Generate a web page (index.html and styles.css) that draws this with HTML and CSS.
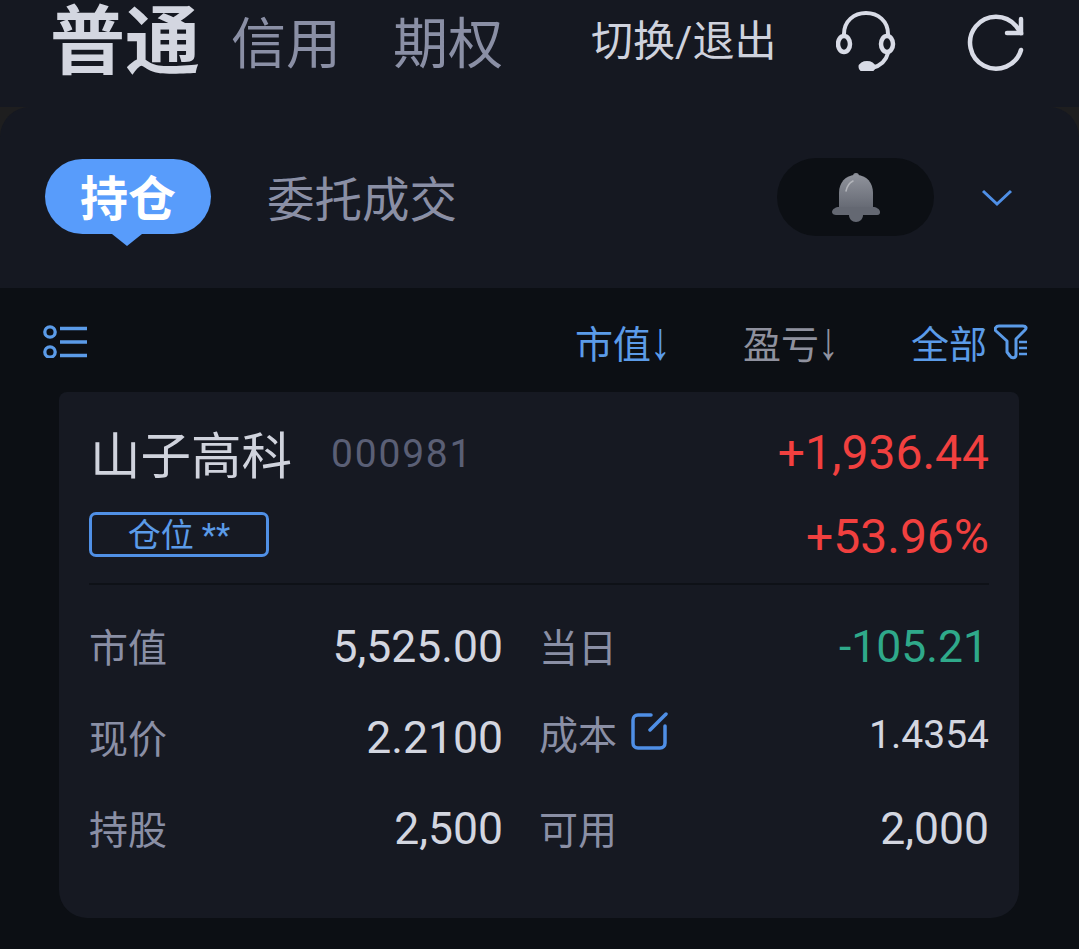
FILE: index.html
```html
<!DOCTYPE html>
<html lang="zh">
<head>
<meta charset="utf-8">
<title>持仓</title>
<link rel="stylesheet" href="styles.css">
</head>
<body>
<header class="top">
  <span class="top-main">普通</span>
  <span class="top-tab top-tab-a">信用</span>
  <span class="top-tab top-tab-b">期权</span>
  <span class="switch">切换/退出</span>
  <svg class="icon-head" viewBox="0 0 60 60" fill="none" stroke="#d8dbe6" stroke-width="4" stroke-linecap="round">
    <path d="M8 25V23C8 10 18 2 30 2S52 10 52 23V25"/>
    <ellipse cx="8" cy="33" rx="6" ry="8" stroke-width="4.500"/>
    <ellipse cx="51" cy="33" rx="6" ry="8" stroke-width="4.500"/>
    <path d="M52 42C50 50 44 55 36 57"/>
    <ellipse cx="31" cy="56" rx="6.500" ry="4" fill="#d8dbe6"/>
  </svg>
  <svg class="icon-refresh" viewBox="0 0 60 60" fill="none" stroke="#d8dbe6" stroke-width="4.500" stroke-linecap="round">
    <path d="M54 38A26 26 0 1 1 49 14L54 21"/>
    <path d="M54 7V21H40"/>
  </svg>
</header>
<div class="panel-wrap">
  <section class="panel">
    <div class="pill">持仓</div>
    <div class="panel-tab">委托成交</div>
    <div class="bell-box">
      <svg class="bell" viewBox="0 0 50 50">
        <defs><linearGradient id="bg1" x1="0" y1="0" x2="0" y2="1"><stop offset="0" stop-color="#8f929b"/><stop offset="1" stop-color="#666a74"/></linearGradient></defs>
        <circle cx="25" cy="4" r="3" fill="#8a8d96"/>
        <path d="M25 3C14 3 8 11 8 21V36H42V21C42 11 36 3 25 3Z" fill="url(#bg1)"/>
        <path d="M1 40C1 37 5 35 8 35H42C45 35 49 37 49 40S47 43 45 43H5C3 43 1 42 1 40Z" fill="#646872"/>
        <path d="M18 43H32C32 47 29 50 25 50S18 47 18 43Z" fill="#646872"/>
        <path d="M15 19C16 14 18 11 22 9" fill="none" stroke="#b3b5bb" stroke-width="1.500" stroke-linecap="round"/>
      </svg>
    </div>
    <svg class="chev" viewBox="0 0 32 18" fill="none" stroke="#4f8fe6" stroke-width="3"><path d="M2 2L16 15L30 2"/></svg>
  </section>
</div>
<nav class="toolbar">
  <svg class="icon-list" viewBox="0 0 46 36" fill="none" stroke="#5b9be8" stroke-width="3.300">
    <circle cx="7" cy="10" r="5.200"/>
    <circle cx="7" cy="30" r="5.200"/>
    <path d="M17 6.500H44M17 20H44M17 33.500H44"/>
  </svg>
  <span class="sort sort-a">市值<span class="arrow">↓</span></span>
  <span class="sort sort-b">盈亏<span class="arrow">↓</span></span>
  <span class="sort sort-c">全部</span>
  <svg class="icon-filter" viewBox="0 0 34 36" fill="none" stroke="#5b9be8" stroke-width="3" stroke-linejoin="round">
    <path d="M5 2H29C32 2 33 4 31 6L22 15V31C22 34 18 35 16 32L13 28V17L2 7C0 5 2 2 5 2Z"/>
    <path d="M25 18H33M25 24H33M25 30H33" stroke-width="2.500"/>
  </svg>
</nav>
<main class="card">
  <div class="card-head">
    <div class="head-left">
      <div class="name-row"><span class="name">山子高科</span><span class="code">000981</span></div>
      <div class="badge">仓位 **</div>
    </div>
    <div class="head-right">
      <div class="profit">+1,936.44</div>
      <div class="profit profit-b">+53.96%</div>
    </div>
  </div>
  <div class="rows">
    <div class="cell-l"><span class="label">市值</span><span class="val">5,525.00</span></div>
    <div class="cell-r"><span class="label">当日</span><span class="val green">-105.21</span></div>
    <div class="cell-l"><span class="label">现价</span><span class="val">2.2100</span></div>
    <div class="cell-r cost"><span class="label">成本<svg class="icon-edit" viewBox="0 0 38 38" fill="none" stroke="#4f8fe6" stroke-width="3.500" stroke-linecap="round"><path d="M20 3H7C4 3 2 5 2 8V31C2 34 4 36 7 36H29C32 36 34 34 34 31V14"/><path d="M19 18L35 2"/></svg></span><span class="val val-small">1.4354</span></div>
    <div class="cell-l"><span class="label">持股</span><span class="val">2,500</span></div>
    <div class="cell-r"><span class="label">可用</span><span class="val">2,000</span></div>
  </div>
</main>
</body>
</html>
```
FILE: styles.css
```css
* { box-sizing: border-box; }
html, body { margin: 0; height: 949px; overflow: hidden; }
body {
  background: #0c0f14;
  font-family: "Noto Sans CJK SC", "Roboto", sans-serif;
  color: #d3d6e0;
}
.top {
  height: 107px;
  background: #151821;
  display: flex;
  align-items: center;
  padding-left: 50px;
}
.top-main {
  font-size: 75px;
  font-weight: 700;
  line-height: 60px;
  color: #d3d6e0;
  margin-top: -36px;
}
.top-tab {
  font-size: 55px;
  line-height: 64px;
  color: #8a8fa5;
  margin-top: -29px;
}
.top-tab-a { margin-left: 31px; }
.top-tab-b { margin-left: 52px; }
.switch {
  font-size: 42px;
  line-height: 50px;
  margin-left: 88px;
  margin-top: -24px;
  color: #cfd2dd;
  font-family: "Roboto", "Noto Sans CJK SC", sans-serif;
  white-space: nowrap;
}
.icon-head { width: 60px; height: 60px; margin-left: 60px; margin-top: -26px; }
.icon-refresh { width: 60px; height: 60px; margin-left: 71px; margin-top: -23px; }

.panel-wrap { background: #1e1e1f; height: 181px; }
.panel {
  height: 181px;
  background: #151821;
  border-radius: 30px 30px 0 0;
  display: flex;
  align-items: flex-start;
  padding: 52px 0 0 45px;
}
.pill {
  position: relative;
  width: 166px;
  height: 75px;
  border-radius: 38px;
  background: #589cfb;
  color: #fff;
  font-size: 48px;
  font-weight: 700;
  line-height: 72px;
  text-align: center;
}
.pill::after {
  content: "";
  position: absolute;
  left: 67px;
  bottom: -12px;
  width: 0;
  height: 0;
  border-left: 15px solid transparent;
  border-right: 15px solid transparent;
  border-top: 12px solid #589cfb;
}
.panel-tab {
  font-size: 47.500px;
  line-height: 76px;
  margin-left: 56px;
  color: #8a8fa5;
  white-space: nowrap;
}
.bell-box {
  width: 157px;
  height: 78px;
  border-radius: 39px;
  background: #0c0f14;
  margin-left: 320px;
  margin-top: -1px;
  display: flex;
  align-items: center;
  justify-content: center;
}
.bell { width: 50px; height: 50px; }
.chev { width: 32px; height: 18px; margin-left: 47px; margin-top: 30px; }

.toolbar {
  height: 104px;
  display: flex;
  align-items: center;
  padding-left: 43px;
  font-size: 38px;
}
.icon-list { width: 46px; height: 36px; margin-top: -1px; }
.sort { line-height: 44px; white-space: nowrap; margin-top: 4px; }
.arrow {
  display: inline-block;
  font-family: "Liberation Sans", sans-serif;
  line-height: 38px;
  transform: translateY(-4px) scale(1.1, 1.4);
}
.sort-a { color: #5b9be8; margin-left: 486px; }
.sort-b { color: #8f919e; margin-left: 73px; }
.sort-c { color: #5b9be8; margin-left: 73px; }
.icon-filter { width: 34px; height: 36px; margin-left: 7px; margin-top: 3px; }

.card {
  width: 960px;
  height: 526px;
  margin-left: 59px;
  background: #161922;
  border-radius: 8px 8px 28px 28px;
  padding: 0 30px 0 30px;
}
.card-head {
  height: 193px;
  display: flex;
  justify-content: space-between;
  border-bottom: 2px solid #0e1117;
}
.name-row { display: flex; align-items: center; height: 60px; margin-top: 30px; padding-left: 1px; }
.name { font-size: 50.500px; line-height: 60px; color: #d0d3dd; }
.code {
  font-family: "Roboto", sans-serif;
  font-size: 39px;
  letter-spacing: 1.800px;
  color: #5a5f75;
  margin-left: 39px;
  margin-top: 4px;
}
.badge {
  width: 180px;
  height: 45px;
  margin-top: 30px;
  border: 3px solid #5090e6;
  border-radius: 7px;
  color: #5b9be8;
  font-size: 33px;
  line-height: 42px;
  text-align: center;
  font-family: "Roboto", "Noto Sans CJK SC", sans-serif;
}
.head-right { text-align: right; padding-top: 30px; }
.profit {
  font-family: "Roboto", sans-serif;
  font-size: 48px;
  line-height: 62px;
  color: #f1403f;
}
.profit-b { margin-top: 22px; }

.rows {
  display: grid;
  grid-template-columns: 414px 450px;
  column-gap: 36px;
  padding-top: 32px;
  grid-auto-rows: 91px;
}
.cell-l, .cell-r {
  display: flex;
  justify-content: space-between;
  align-items: flex-start;
  height: 60px;
}
.label {
  font-size: 39px;
  line-height: 57px;
  color: #8a8fa5;
  display: flex;
  align-items: center;
}
.val {
  font-family: "Roboto", sans-serif;
  font-size: 44.500px;
  line-height: 60px;
  color: #d3d6e0;
}
.val-small { font-size: 39px; }
.green { color: #2fa98a; margin-right: 1px; }
.cost .label { margin-top: -4px; }
.cost .val { margin-top: -3px; }
.icon-edit { width: 38px; height: 38px; margin-left: 14px; margin-top: -3px; }
```
